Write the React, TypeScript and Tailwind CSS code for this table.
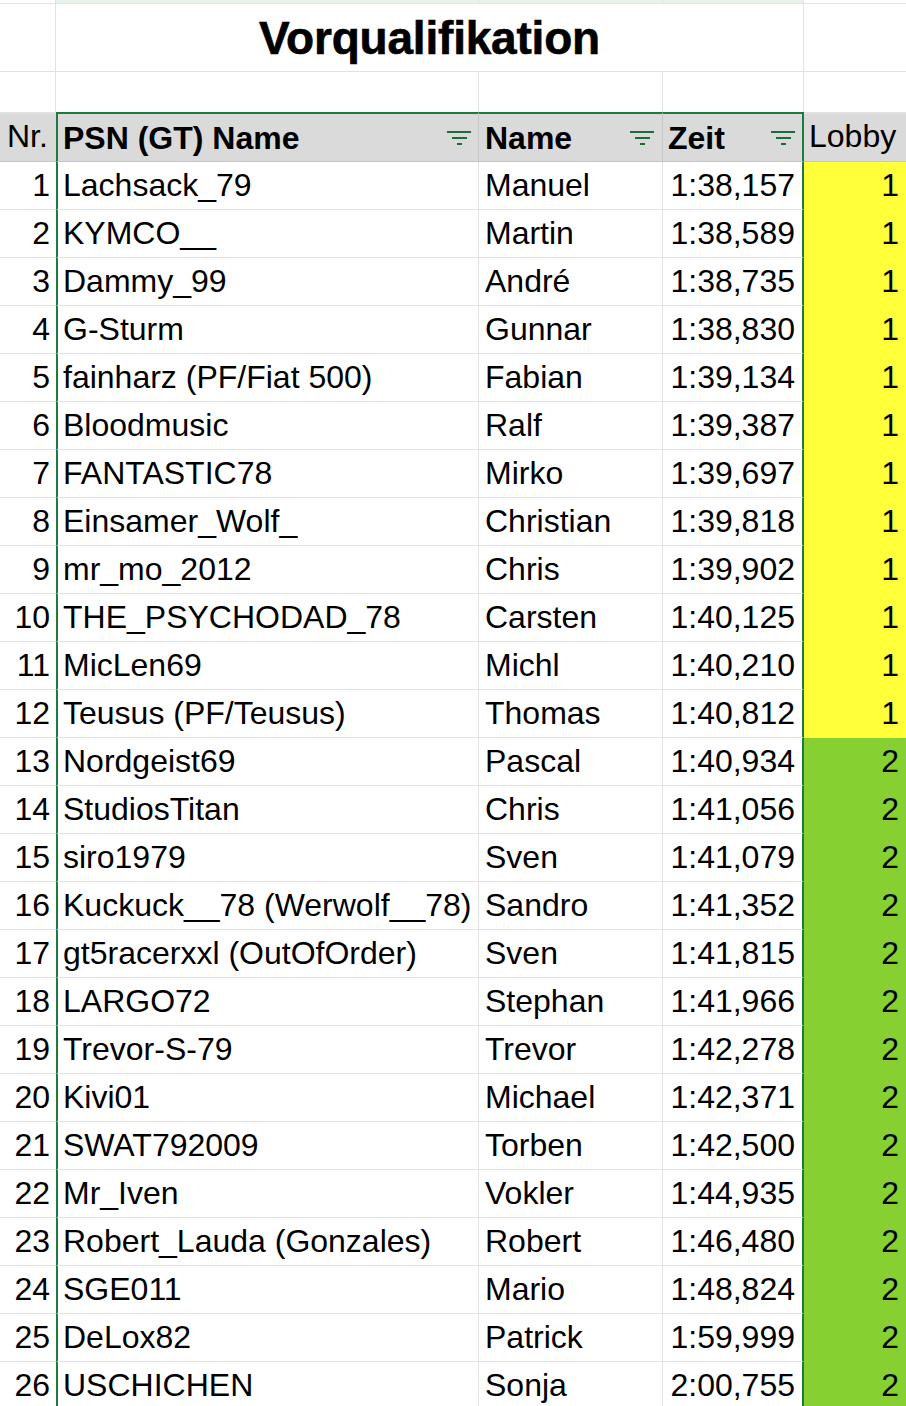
import React from 'react';

type Row = [string, string, string, number];

const ROWS: Row[] = [
  ['Lachsack_79', 'Manuel', '1:38,157', 1],
  ['KYMCO__', 'Martin', '1:38,589', 1],
  ['Dammy_99', 'André', '1:38,735', 1],
  ['G-Sturm', 'Gunnar', '1:38,830', 1],
  ['fainharz (PF/Fiat 500)', 'Fabian', '1:39,134', 1],
  ['Bloodmusic', 'Ralf', '1:39,387', 1],
  ['FANTASTIC78', 'Mirko', '1:39,697', 1],
  ['Einsamer_Wolf_', 'Christian', '1:39,818', 1],
  ['mr_mo_2012', 'Chris', '1:39,902', 1],
  ['THE_PSYCHODAD_78', 'Carsten', '1:40,125', 1],
  ['MicLen69', 'Michl', '1:40,210', 1],
  ['Teusus (PF/Teusus)', 'Thomas', '1:40,812', 1],
  ['Nordgeist69', 'Pascal', '1:40,934', 2],
  ['StudiosTitan', 'Chris', '1:41,056', 2],
  ['siro1979', 'Sven', '1:41,079', 2],
  ['Kuckuck__78 (Werwolf__78)', 'Sandro', '1:41,352', 2],
  ['gt5racerxxl (OutOfOrder)', 'Sven', '1:41,815', 2],
  ['LARGO72', 'Stephan', '1:41,966', 2],
  ['Trevor-S-79', 'Trevor', '1:42,278', 2],
  ['Kivi01', 'Michael', '1:42,371', 2],
  ['SWAT792009', 'Torben', '1:42,500', 2],
  ['Mr_Iven', 'Vokler', '1:44,935', 2],
  ['Robert_Lauda (Gonzales)', 'Robert', '1:46,480', 2],
  ['SGE011', 'Mario', '1:48,824', 2],
  ['DeLox82', 'Patrick', '1:59,999', 2],
  ['USCHICHEN', 'Sonja', '2:00,755', 2],
];

const COLS = 'grid grid-cols-[56px_423px_184px_141px_102px]';

function FilterIcon() {
  return (
    <svg width="24" height="14" viewBox="0 0 24 14" className="shrink-0">
      <rect x="0" y="0" width="24" height="2" fill="#1e6b38" />
      <rect x="5" y="6" width="15" height="2" fill="#1e6b38" />
      <rect x="10" y="12" width="5" height="2" fill="#1e6b38" />
    </svg>
  );
}

export default function App() {
  return (
    <div className="w-[906px] h-[1406px] overflow-hidden bg-white text-black font-['Liberation_Sans',Arial,sans-serif] text-[32px] leading-[48px]">
      {/* partially visible row above the title */}
      <div className={`${COLS} h-[4px]`}>
        <div className="border-r border-b border-[#e2e2e2]" />
        <div className="bg-[#e8f3ea] border-r border-b border-[#e2e2e2]" />
        <div className="bg-[#e8f3ea] border-r border-b border-[#e2e2e2]" />
        <div className="bg-[#e8f3ea] border-r border-b border-[#e2e2e2]" />
        <div className="border-b border-[#e2e2e2]" />
      </div>

      {/* title */}
      <div className={`${COLS} h-[68px]`}>
        <div className="border-r border-b border-[#e2e2e2]" />
        <div className="col-span-3 border-r border-b border-[#e2e2e2] flex items-center justify-center">
          <span className="font-bold text-[46px] leading-none tracking-[-0.2px] [-webkit-text-stroke:0.6px_black]">Vorqualifikation</span>
        </div>
        <div className="border-b border-[#e2e2e2]" />
      </div>

      {/* empty row */}
      <div className={`${COLS} h-[40px]`}>
        <div className="border-r border-[#e2e2e2]" />
        <div className="border-r border-[#e2e2e2]" />
        <div className="border-r border-[#e2e2e2]" />
        <div className="border-r border-[#e2e2e2]" />
        <div />
      </div>

      {/* header */}
      <div className={`${COLS} h-[50px] bg-[#dadada]`}>
        <div className="border-t-2 border-t-[#e2e2e2] border-b border-b-[#c6c6c6] pl-[7px] leading-[44px]">Nr.</div>
        <div className="border-t-2 border-l-2 border-t-[#1e7b3d] border-l-[#1e7b3d] border-r border-r-[#c6c6c6] border-b border-b-[#c6c6c6] pl-[5px] pr-[7px] flex items-center justify-between">
          <span className="font-bold leading-[44px]">PSN (GT) Name</span>
          <FilterIcon />
        </div>
        <div className="border-t-2 border-t-[#1e7b3d] border-r border-r-[#c6c6c6] border-b border-b-[#c6c6c6] pl-[6px] pr-[8px] flex items-center justify-between">
          <span className="font-bold leading-[44px]">Name</span>
          <FilterIcon />
        </div>
        <div className="border-t-2 border-t-[#1e7b3d] border-r-2 border-r-[#1e7b3d] border-b border-b-[#c6c6c6] pl-[5px] pr-[7px] flex items-center justify-between">
          <span className="font-bold leading-[44px]">Zeit</span>
          <FilterIcon />
        </div>
        <div className="border-t-2 border-t-[#e2e2e2] border-b border-b-[#c6c6c6] pl-[5px] leading-[44px]">Lobby</div>
      </div>

      {/* data */}
      {ROWS.map((r, i) => (
        <div key={i} className={`${COLS} h-[48px]`}>
          <div className="border-b border-[#e2e2e2] text-right pr-[6px] leading-[46px]">{i + 1}</div>
          <div className="border-l-2 border-l-[#1e7b3d] border-r border-r-[#e2e2e2] border-b border-b-[#e2e2e2] pl-[5px] leading-[46px] whitespace-nowrap overflow-hidden">{r[0]}</div>
          <div className="border-r border-r-[#e2e2e2] border-b border-b-[#e2e2e2] pl-[6px] leading-[46px] whitespace-nowrap">{r[1]}</div>
          <div className="border-r-2 border-r-[#1e7b3d] border-b border-b-[#e2e2e2] text-right pr-[7px] leading-[46px]">{r[2]}</div>
          <div className={`text-right pr-[7px] leading-[47px] ${r[3] === 1 ? 'bg-[#ffff3a]' : 'bg-[#86d032]'}`}>{r[3]}</div>
        </div>
      ))}
    </div>
  );
}
